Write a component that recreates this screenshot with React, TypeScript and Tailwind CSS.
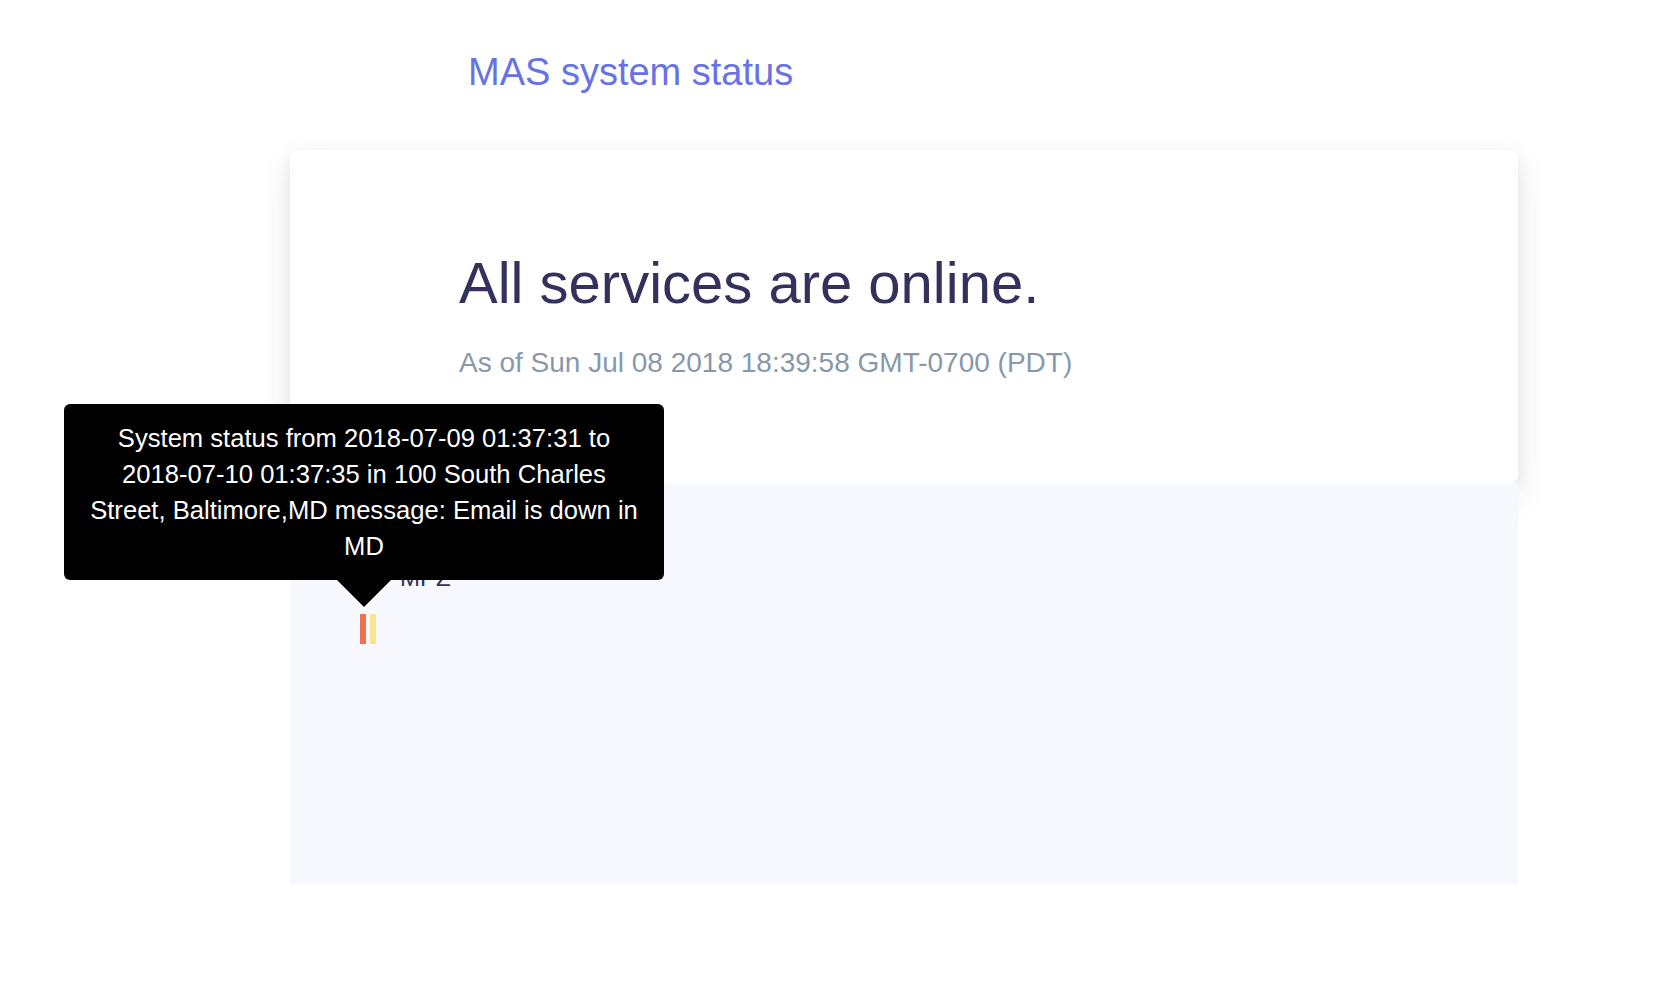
import React from "react";

export default function App() {
  return (
    <div className="relative min-h-[988px] w-[1680px] bg-white font-['Liberation_Sans',Arial,sans-serif]">
      <div className="h-[150px] pl-[468px] pt-[50px]">
        <h1 className="text-[38px] leading-[44px] font-normal text-[#6772e5]">MAS system status</h1>
      </div>

      <div className="ml-[290px] h-[333px] w-[1228px] rounded-[8px] bg-white pl-[169px] pt-[99px] shadow-[0_15px_35px_rgba(50,50,93,0.1),0_5px_15px_rgba(0,0,0,0.07)]">
        <h2 className="text-[58px] leading-[68px] font-normal text-[#32325d]">All services are online.</h2>
        <p className="mt-[29px] text-[28px] leading-[34px] text-[#8898aa]">
          As of Sun Jul 08 2018 18:39:58 GMT-0700 (PDT)
        </p>
      </div>

      <div className="ml-[290px] h-[401px] w-[1228px] bg-[#f7f8fd] pl-[70px] pt-[81px]">
        <div className="pl-[40px] text-[24px] leading-[28px] text-[#32325d]">MPZ</div>
        <div className="mt-[22px] flex gap-[4px]">
          <div className="h-[30px] w-[6px] bg-[#ea7452]" />
          <div className="h-[30px] w-[6px] bg-[#f9e490]" />
        </div>
      </div>

      <div className="absolute left-[64px] top-[404px] w-[600px] rounded-[6px] bg-black px-[20px] py-[16px] text-center text-[25.6px] leading-[36px] text-white">
        System status from {"2018\u201107\u201109"} 01:37:31 to {"2018\u201107\u201110"} 01:37:35 in 100 South Charles Street, Baltimore,MD message: Email is down in MD
        <div className="absolute left-1/2 top-full h-0 w-0 -translate-x-1/2 border-l-[27px] border-r-[27px] border-t-[27px] border-l-transparent border-r-transparent border-t-black" />
      </div>
    </div>
  );
}
